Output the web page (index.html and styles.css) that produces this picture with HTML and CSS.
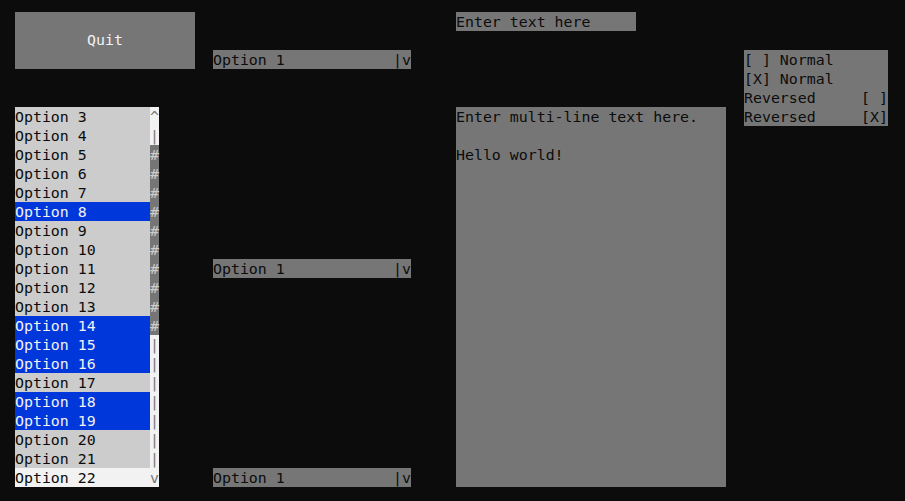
FILE: index.html
```html
<!DOCTYPE html>
<html>
<head>
<meta charset="utf-8">
<link rel="stylesheet" href="styles.css">
</head>
<body>
<div class="screen">
  <button class="quit">Quit</button>

  <div class="field text-field">Enter text here</div>

  <div class="dropdown dd1"><span class="txt">Option 1</span><span class="txt">|v</span></div>

  <div class="checks">
    <div class="check">[ ] Normal</div>
    <div class="check">[X] Normal</div>
    <div class="check rev"><span class="txt">Reversed</span><span class="txt">[ ]</span></div>
    <div class="check rev"><span class="txt">Reversed</span><span class="txt">[X]</span></div>
  </div>

  <div class="listbox">
    <div class="items">
      <div class="item">Option 3</div>
      <div class="item">Option 4</div>
      <div class="item">Option 5</div>
      <div class="item">Option 6</div>
      <div class="item">Option 7</div>
      <div class="item sel">Option 8</div>
      <div class="item">Option 9</div>
      <div class="item">Option 10</div>
      <div class="item">Option 11</div>
      <div class="item">Option 12</div>
      <div class="item">Option 13</div>
      <div class="item sel">Option 14</div>
      <div class="item sel">Option 15</div>
      <div class="item sel">Option 16</div>
      <div class="item">Option 17</div>
      <div class="item sel">Option 18</div>
      <div class="item sel">Option 19</div>
      <div class="item">Option 20</div>
      <div class="item">Option 21</div>
      <div class="item cur">Option 22</div>
    </div>
    <div class="scrollbar">
      <div class="sb">^</div>
      <div class="sb">|</div>
      <div class="sb thumb">#</div>
      <div class="sb thumb">#</div>
      <div class="sb thumb">#</div>
      <div class="sb thumb">#</div>
      <div class="sb thumb">#</div>
      <div class="sb thumb">#</div>
      <div class="sb thumb">#</div>
      <div class="sb thumb">#</div>
      <div class="sb thumb">#</div>
      <div class="sb thumb">#</div>
      <div class="sb">|</div>
      <div class="sb">|</div>
      <div class="sb">|</div>
      <div class="sb">|</div>
      <div class="sb">|</div>
      <div class="sb">|</div>
      <div class="sb">|</div>
      <div class="sb">v</div>
    </div>
  </div>

  <div class="dropdown dd2"><span class="txt">Option 1</span><span class="txt">|v</span></div>

  <div class="field textarea">
    <div class="line">Enter multi-line text here.</div>
    <div class="line"></div>
    <div class="line">Hello world!</div>
  </div>

  <div class="dropdown dd3"><span class="txt">Option 1</span><span class="txt">|v</span></div>
</div>
</body>
</html>
```

FILE: styles.css
```css
html, body {
  margin: 0;
  padding: 0;
  background: #0c0c0c;
}

.screen {
  display: grid;
  grid-template-columns: repeat(99, 9px);
  grid-template-rows: repeat(25, 19px);
  padding: 12px 0 0 6px;
  font-family: "DejaVu Sans Mono", "Liberation Mono", monospace;
  font-size: 14.9px;
  line-height: 21px;
  color: #0c0c0c;
}

.txt,
.item,
.check,
.line,
.text-field {
  white-space: pre;
}

.quit {
  grid-column: 2 / span 20;
  grid-row: 1 / span 3;
  background: #767676;
  color: #f2f2f2;
  border: 0;
  padding: 0 0 1px;
  margin: 0;
  font: inherit;
  display: flex;
  align-items: center;
  justify-content: center;
}

.field {
  background: #767676;
  color: #0c0c0c;
}

.text-field {
  grid-column: 51 / span 20;
  grid-row: 1;
  height: 19px;
}

.textarea {
  grid-column: 51 / span 30;
  grid-row: 6 / span 20;
}

.line {
  height: 19px;
}

.dropdown {
  grid-column: 24 / span 22;
  height: 19px;
  background: #767676;
  display: flex;
  justify-content: space-between;
}

.dd1 { grid-row: 3; }
.dd2 { grid-row: 14; }
.dd3 { grid-row: 25; }

.checks {
  grid-column: 83 / span 16;
  grid-row: 3 / span 4;
  background: #767676;
  display: flex;
  flex-direction: column;
}

.check {
  height: 19px;
}

.check.rev {
  display: flex;
  justify-content: space-between;
}

.listbox {
  grid-column: 2 / span 16;
  grid-row: 6 / span 20;
  display: flex;
}

.items {
  width: 135px;
  display: flex;
  flex-direction: column;
}

.item {
  height: 19px;
  flex: none;
  background: #cccccc;
  color: #0c0c0c;
}

.item.sel {
  background: #0037da;
  color: #f2f2f2;
}

.item.cur {
  background: #f2f2f2;
  color: #0c0c0c;
}

.scrollbar {
  width: 9px;
  display: flex;
  flex-direction: column;
  background: #f2f2f2;
}

.sb {
  height: 19px;
  flex: none;
  color: #767676;
  text-align: center;
}

.sb.thumb {
  background: #767676;
  color: #cccccc;
}
```
